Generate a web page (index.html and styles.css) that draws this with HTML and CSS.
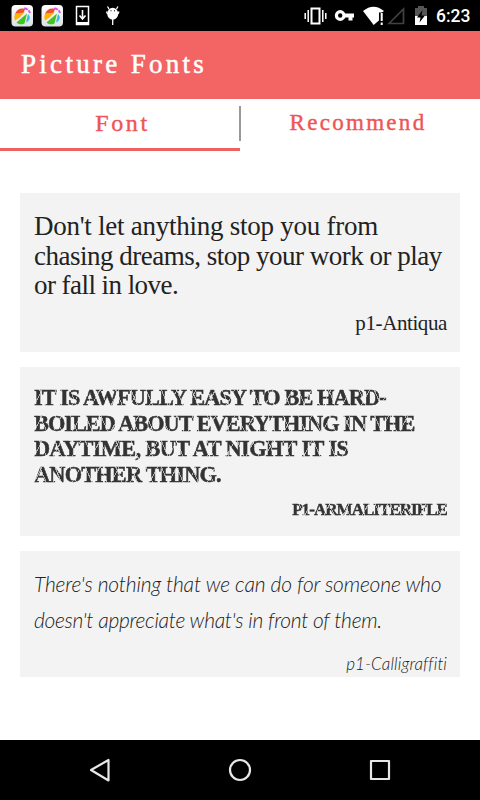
FILE: index.html
```html
<!DOCTYPE html>
<html lang="en">
<head>
    <meta charset="UTF-8">
    <meta name="viewport" content="width=device-width, initial-scale=1.0">
    <title>Picture Fonts</title>
    <link rel="stylesheet" href="styles.css">
</head>
<body>
    <!-- Status bar -->
    <div class="status-bar">
        <svg width="130" height="31" viewBox="0 0 130 31">
            <defs>
                <linearGradient id="tile" x1="0" y1="0" x2="0" y2="1">
                    <stop offset="0" stop-color="#fff"/>
                    <stop offset="1" stop-color="#dcdfe5"/>
                </linearGradient>
                <g id="app">
                    <rect width="21.5" height="21.5" rx="4" fill="url(#tile)"/>
                    <path d="M3.500 9C5 4.500 9 2.500 13.500 4L12 8Z" fill="#f2502c"/>
                    <path d="M3.500 15.500C2.500 12.500 2.500 10.500 4 8.500L13 7.500 8 12.500Z" fill="#ffb400"/>
                    <path d="M5 17.500L15.500 8.500 13 18.500C10 20 7 19.500 5 17.500Z" fill="#3fc522"/>
                    <path d="M14.500 17.500L16.500 9C19.500 12 18.500 15.500 14.500 17.500Z" fill="#39b8e9"/>
                    <path d="M12.500 3.500Q17 3.500 18.500 8" fill="none" stroke="#d45bdf" stroke-width="2" stroke-dasharray="4 1"/>
                </g>
            </defs>
            <use href="#app" x="11.500" y="5"/>
            <use href="#app" x="41.500" y="5"/>
            <path d="M76.500 6.500H88.500V24.500H76.500Z" fill="none" stroke="#fff" stroke-width="1.500"/>
            <path d="M76 22H89V25H76Z" fill="#fff"/>
            <path d="M82.500 10V17.500M79.500 15.500L82.500 19 85.500 15.500" fill="none" stroke="#fff" stroke-width="1.600"/>
            <ellipse cx="112.700" cy="13.800" rx="5.500" ry="6" fill="#fff"/>
            <path d="M109 9L107.500 6.500M116.500 9L118 6.500M107.500 14L106.500 11.500M118 14L119 11.500M112.700 18V25" stroke="#fff" stroke-width="1.300"/>
            <path d="M110.500 10.800h1M114 10.800h1" stroke="#000" stroke-width="1"/>
        </svg>
        <div class="status-right">
            <svg width="126" height="31" viewBox="302 0 126 31">
                <path d="M311.500 8.500H319.500V23.500H311.500Z" fill="none" stroke="#fff" stroke-width="2"/>
                <path d="M308.200 10V22M322.800 10V22M305.200 13V19M325.800 13V19" stroke="#fff" stroke-width="1.500"/>
                <circle cx="340.200" cy="15.500" r="3.800" fill="none" stroke="#fff" stroke-width="3.200"/>
                <path d="M345 13.500H354V17.500H352.500V20.500H348.500V17.500H345Z" fill="#fff"/>
                <path d="M363 11Q373.500 2.500 384 11L380 14V19.500L373.700 25Z" fill="#fff"/>
                <path d="M379 12.500H385V26H379Z" fill="#000"/>
                <path d="M381.700 13V21M381.700 22.500V25" stroke="#fff" stroke-width="2"/>
                <path d="M389 23.500L403.500 9V23.500Z" fill="none" stroke="#424242" stroke-width="1.700"/>
                <path d="M415 8H418V6H424V8H427V17H415Z" fill="#555"/>
                <path d="M415 16H427V25H415Z" fill="#fff"/>
                <path d="M422.500 10L417 17.500H420.500L419.500 22.500L425 15.500H421.500Z" fill="#000"/>
            </svg>
            <span class="clock">6:23</span>
        </div>
    </div>

    <header>
        <h1>Picture Fonts</h1>
    </header>

    <div class="tabs">
        <div class="tab active">Font</div>
        <div class="tab recommend">Recommend</div>
    </div>

    <!-- Font previews -->
    <main class="font-list">
        <div class="font-card antiqua">
            <p>
                <span class="line1">Don't let anything stop you from</span>
                <span class="line2">chasing dreams, stop your work or play</span>
                <span class="line3">or fall in love.</span>
            </p>
            <div class="font-name">p1-Antiqua</div>
        </div>
        <div class="font-card rifle">
            <p>
                <span class="line1">IT IS AWFULLY EASY TO BE HARD-</span>
                <span class="line2">BOILED ABOUT EVERYTHING IN THE</span>
                <span class="line3">DAYTIME, BUT AT NIGHT IT IS</span>
                <span class="line4">ANOTHER THING.</span>
            </p>
            <div class="font-name">P1-ARMALITERIFLE</div>
        </div>
        <div class="font-card calligraffiti">
            <p>
                <span class="line1">There's nothing that we can do for someone who</span>
                <span class="line2">doesn't appreciate what's in front of them.</span>
            </p>
            <div class="font-name">p1-Calligraffiti</div>
        </div>
    </main>

    <!-- Navigation bar -->
    <nav class="nav-bar">
        <svg width="24" height="26" viewBox="0 0 24 26"><path d="M3 13L20.500 3V23.500Z"/></svg>
        <svg width="24" height="26" viewBox="0 0 24 26"><circle cx="12" cy="13" r="10"/></svg>
        <svg width="24" height="26" viewBox="0 0 24 26"><rect x="3" y="4" width="18" height="18"/></svg>
    </nav>
</body>
</html>
```
FILE: styles.css
```css
/* Global Styles */
* {
    box-sizing: border-box;
}

body {
    font-family: "Liberation Serif", serif;
    background: white;
    color: #222;
    margin: 0;
    height: 800px;
    display: flex;
    flex-direction: column;
    overflow: hidden;
    white-space: nowrap;
}

svg {
    display: block;
}

/* Status bar */
.status-bar {
    background: black;
    color: white;
    height: 31px;
    display: flex;
    justify-content: space-between;
}

.status-right {
    display: flex;
}

.clock {
    font-family: Roboto, sans-serif;
    font-size: 17.5px;
    font-weight: 500;
    line-height: 33px;
    width: 44px;
    margin-left: 8px;
}

/* Header */
header {
    background: #f36464;
    color: white;
    height: 68px;
    padding-left: 21px;
    flex-shrink: 0;
}

header h1 {
    font-size: 27px;
    font-weight: normal;
    line-height: 66px;
    letter-spacing: 3.3px;
    margin: 0;
    -webkit-text-stroke: 0.5px white;
}

/* Tabs */
.tabs {
    display: flex;
    height: 52px;
    background: linear-gradient(#999, #999) 239px 7px / 2px 35px no-repeat;
    flex-shrink: 0;
}

.tab {
    width: 240px;
    color: #ee5555;
    font-size: 24px;
    line-height: 48px;
    text-align: center;
    letter-spacing: 2.6px;
    -webkit-text-stroke: 0.4px #ee5555;
}

.tab.active {
    border-bottom: 3px solid #ee6161;
    padding-left: 5px;
}

.tab.recommend {
    font-size: 23px;
    letter-spacing: 2.3px;
    padding-right: 4px;
}

/* Font previews */
.font-list {
    flex: 1;
    padding: 42px 20px 0;
    display: flex;
    flex-direction: column;
    gap: 15px;
}

.font-card {
    background: #f3f3f3;
    padding: 0 13px 0 14px;
    overflow: hidden;
    display: flex;
    flex-direction: column;
    justify-content: space-between;
}

.font-card p {
    margin: 0;
}

.font-card p span {
    display: block;
}

.font-name {
    text-align: right;
}

.antiqua {
    height: 159px;
    padding-top: 19px;
    padding-bottom: 15px;
}

.antiqua p {
    font-size: 27px;
    line-height: 29.5px;
}

.antiqua .line1 {
    letter-spacing: -0.25px;
}

.antiqua .line2 {
    letter-spacing: -0.5px;
}

.antiqua .line3 {
    letter-spacing: -0.55px;
}

.antiqua .font-name {
    font-size: 21px;
    line-height: 27px;
    letter-spacing: -0.4px;
}

.rifle {
    height: 169px;
    font-weight: bold;
    padding-top: 18px;
    padding-bottom: 13px;
}

/* worn stencil ink */
.rifle p span,
.rifle .font-name {
    color: transparent;
    background:
        repeating-linear-gradient(118deg, transparent 0 9px, #f3f3f3aa 9px 10px, transparent 10px 17px),
        repeating-linear-gradient(67deg, #333 0 13px, #aaa 13px 14px);
    -webkit-background-clip: text;
    background-clip: text;
    -webkit-text-stroke: 0.5px transparent;
}

.rifle p {
    font-size: 22.3px;
    line-height: 25.7px;
}

.rifle .line1 {
    letter-spacing: -0.87px;
}

.rifle .line2 {
    letter-spacing: -0.98px;
}

.rifle .line3 {
    letter-spacing: -0.6px;
}

.rifle .line4 {
    letter-spacing: -0.78px;
}

.rifle .font-name {
    font-size: 17px;
    line-height: 26px;
    letter-spacing: -0.95px;
}

.calligraffiti {
    height: 126px;
    font-family: Lato, sans-serif;
    font-style: italic;
    font-weight: 300;
    padding-top: 15px;
}

.calligraffiti p {
    font-size: 21px;
    line-height: 35.5px;
}

.calligraffiti .line1 {
    letter-spacing: -0.15px;
}

.calligraffiti .line2 {
    letter-spacing: -0.28px;
}

.calligraffiti .font-name {
    font-size: 17px;
    line-height: 26px;
    letter-spacing: 0.1px;
}

/* Navigation bar */
.nav-bar {
    background: black;
    height: 60px;
    display: flex;
    justify-content: center;
    align-items: center;
    gap: 116px;
    flex-shrink: 0;
}

.nav-bar svg {
    fill: none;
    stroke: #e8e8e8;
    stroke-width: 2.2;
    stroke-linejoin: round;
}
```
